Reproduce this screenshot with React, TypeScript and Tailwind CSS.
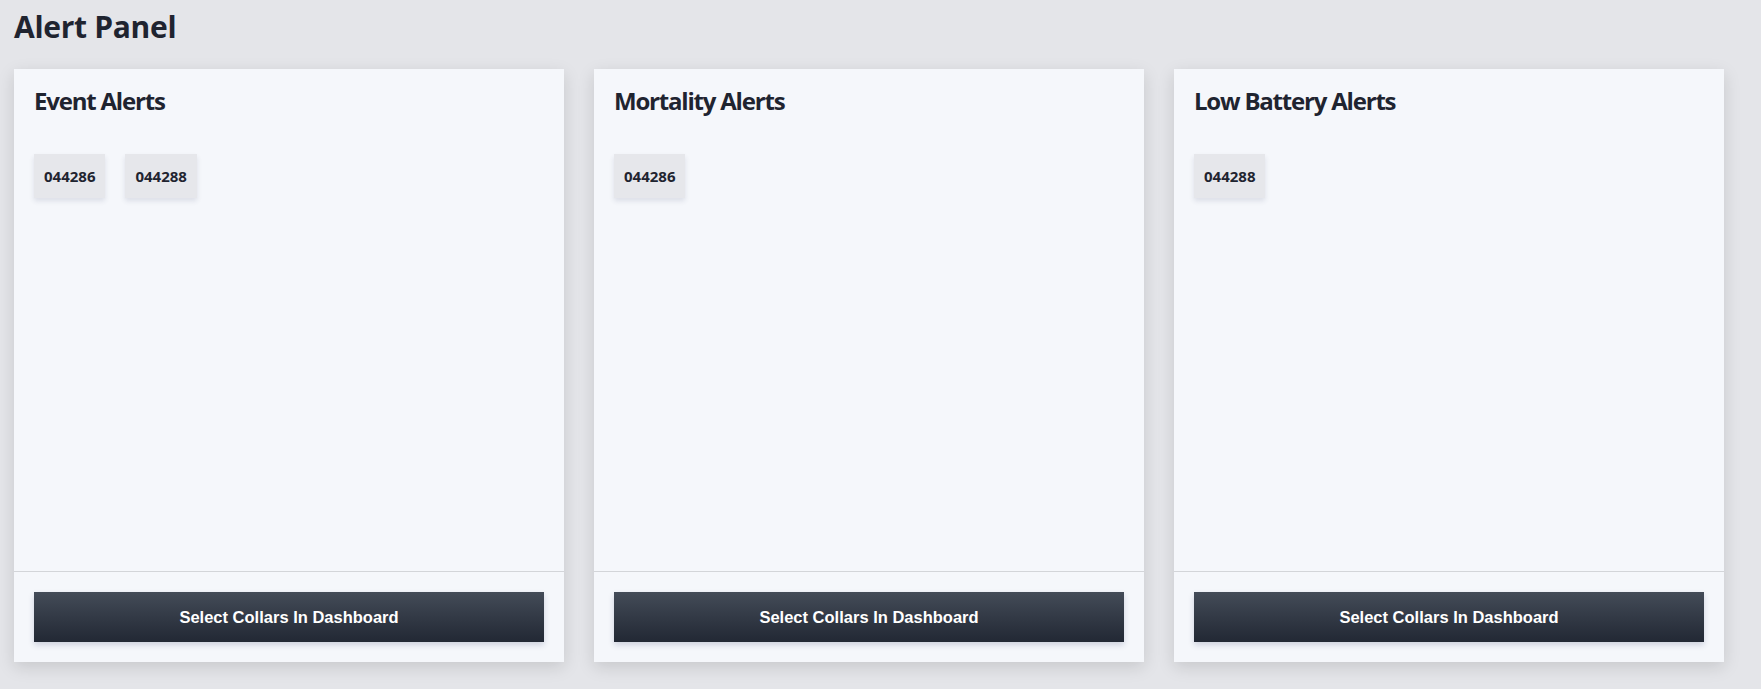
const panels = [
  { title: 'Event Alerts', collars: ['044286', '044288'] },
  { title: 'Mortality Alerts', collars: ['044286'] },
  { title: 'Low Battery Alerts', collars: ['044288'] },
];

const AlertCard = ({ title, collars }: { title: string; collars: string[] }) => {
  return (
    <div className="w-[550px] h-[593px] flex flex-col bg-[#f5f7fb] shadow-[0_5px_16px_rgba(0,0,0,0.13)]">
      <div className="flex-1 px-5 pt-4">
        <h2 className="text-2xl font-bold tracking-[-1.2px] text-[#1f2430]">{title}</h2>
        <div className="flex gap-5 mt-[37px]">
          {collars.map((c) => (
            <div
              key={c}
              className="h-[44px] px-[10px] flex items-center bg-[#e6e7eb] text-[15px] font-bold text-[#1f2430] shadow-[0_3px_5px_rgba(40,50,90,0.12)]"
            >
              {c}
            </div>
          ))}
        </div>
      </div>
      <div className="border-t border-[#d3d5d9] p-5">
        <button className="w-full h-[50px] bg-gradient-to-b from-[#444c58] to-[#222834] text-white font-bold text-[16.5px] font-['Liberation_Sans',Arial,sans-serif] shadow-[0_3px_6px_rgba(30,40,90,0.18)]">
          Select Collars In Dashboard
        </button>
      </div>
    </div>
  );
};

export default function App() {
  return (
    <div className="min-h-screen bg-[#e4e5e9] px-[14px] pt-[9px] pb-8 font-['Open_Sans',sans-serif]">
      <h1 className="text-3xl font-bold tracking-[-0.3px] text-[#1f2430] mb-6">Alert Panel</h1>
      <div className="flex gap-[30px]">
        {panels.map((p) => (
          <AlertCard key={p.title} title={p.title} collars={p.collars} />
        ))}
      </div>
    </div>
  );
}
